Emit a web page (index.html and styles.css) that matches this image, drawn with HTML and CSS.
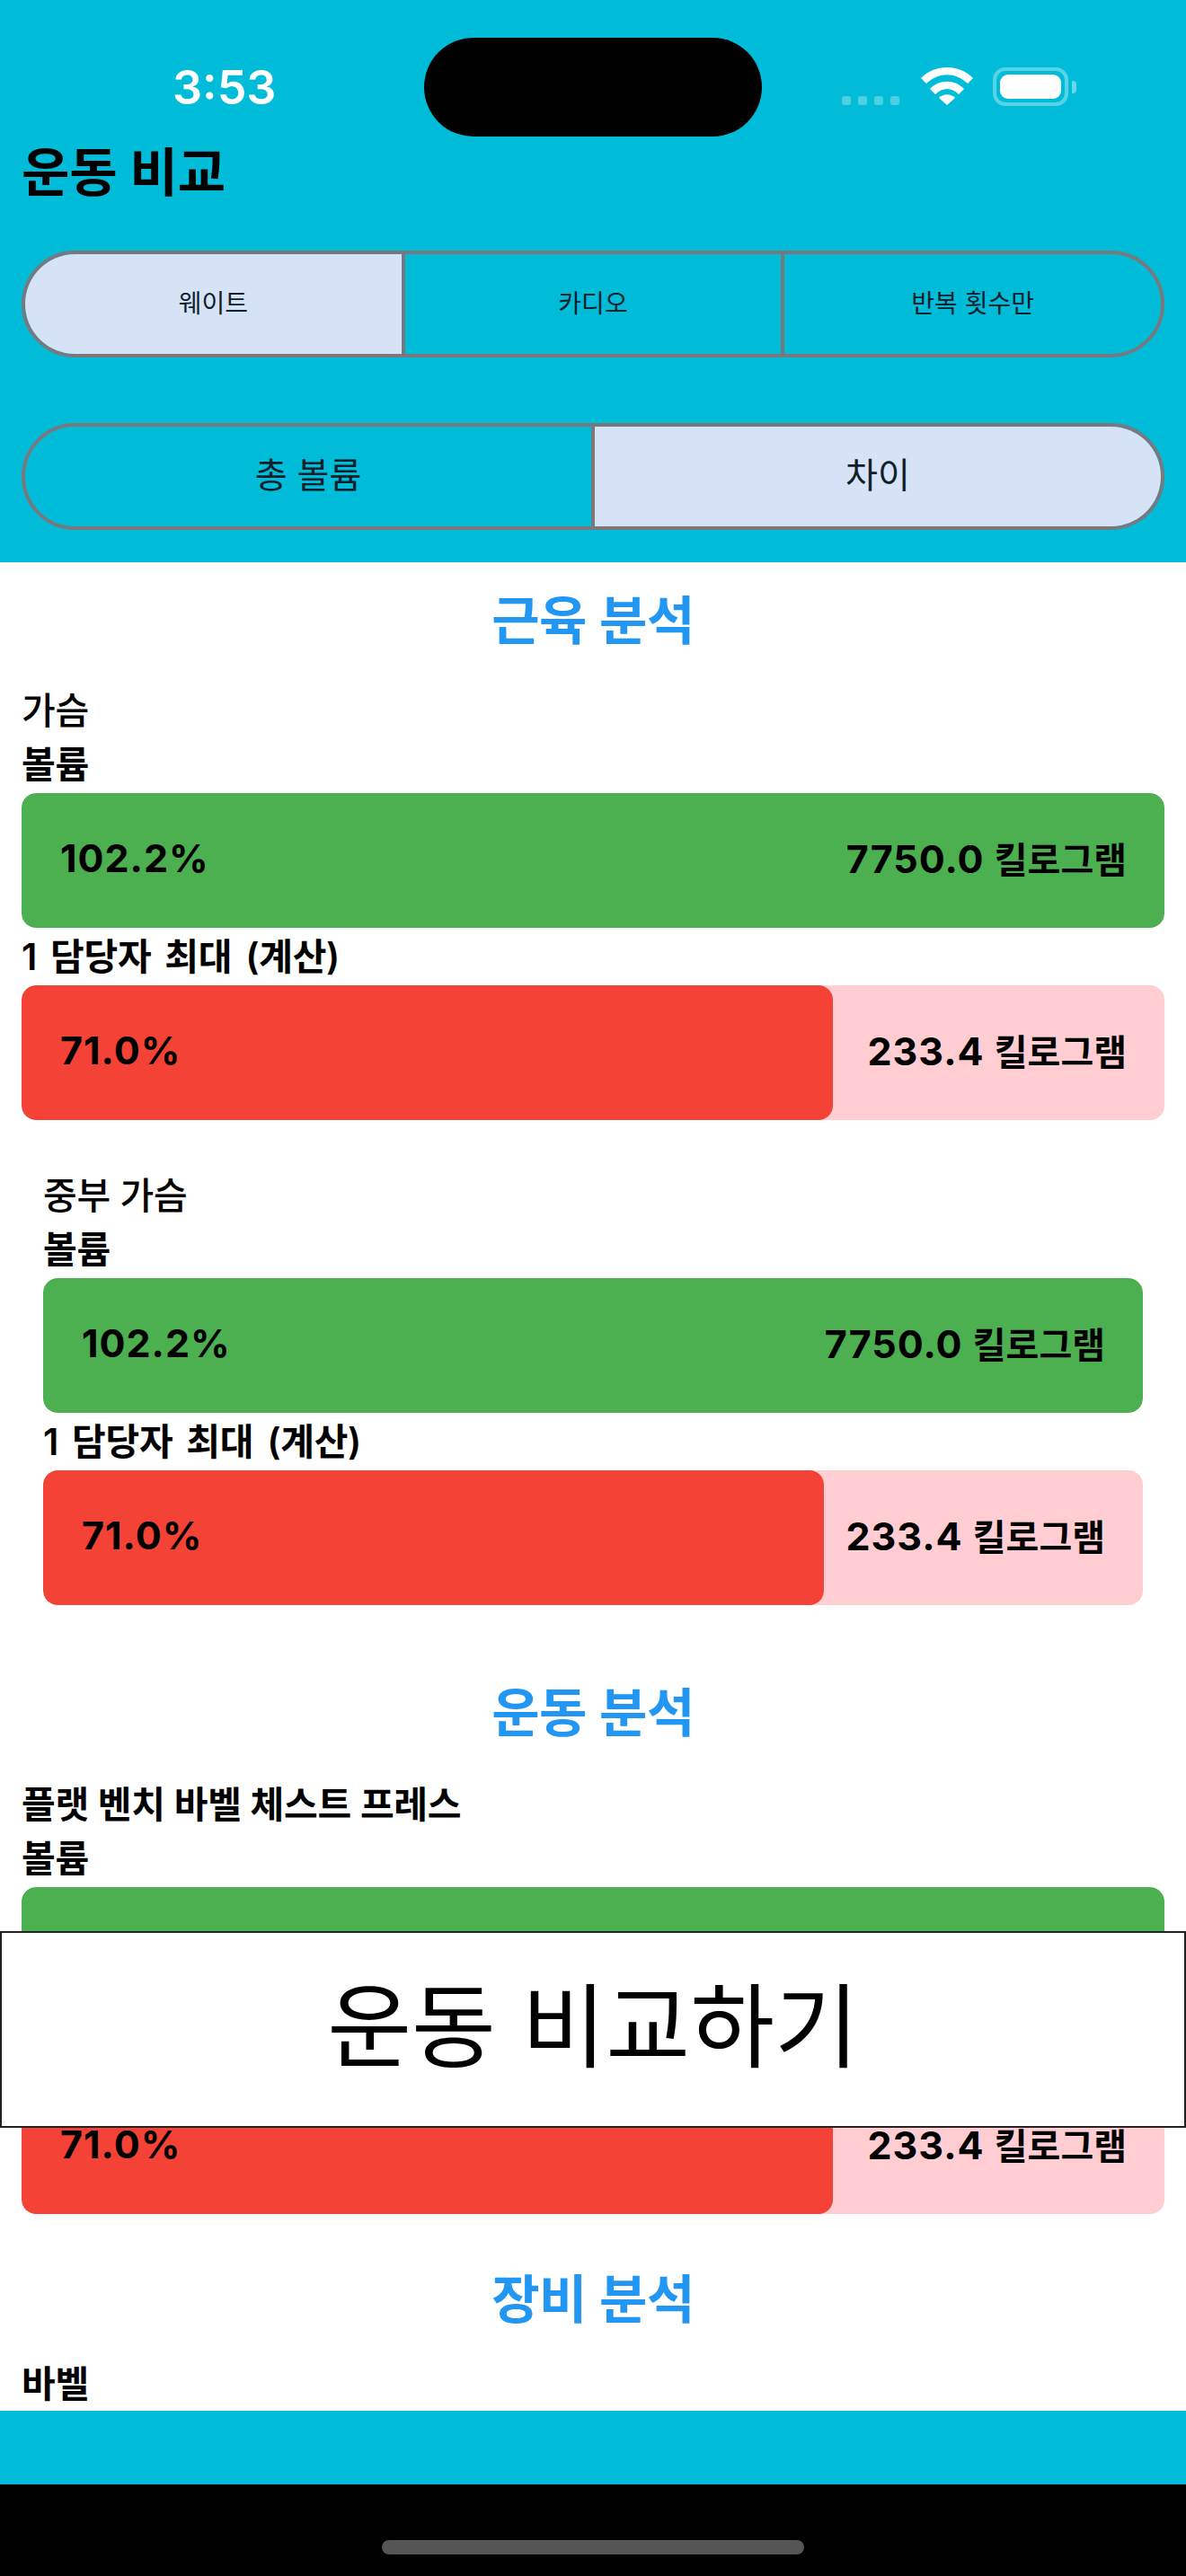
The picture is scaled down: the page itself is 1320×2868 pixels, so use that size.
FILE: index.html
```html
<!DOCTYPE html>
<html lang="ko">

<head>
    <meta charset="UTF-8">
    <title>운동 비교</title>
    <link rel="stylesheet" href="styles.css">
</head>

<body>

    <div class="app">
        <header class="top">
            <div class="status-bar">
                <div class="time">3:53</div>
                <div class="island"></div>
                <div class="status-icons">
                    <div class="signal"><span></span><span></span><span></span><span></span></div>
                    <svg class="wifi" width="58" height="42" viewBox="0 0 58 42">
                        <path d="M0 12C15-4 43-4 58 12L52 18C38 5 20 5 6 18Z" />
                        <path d="M10 24C20 13 38 13 48 24L42 30C34 22 24 22 16 30Z" />
                        <path d="M20 34C25 29 33 29 38 34L29 42Z" />
                    </svg>
                    <div class="battery"><div class="battery-level"></div></div>
                    <div class="battery-tip"></div>
                </div>
            </div>

            <h1>운동 비교</h1>

            <div class="segments small">
                <button class="selected">웨이트</button>
                <button>카디오</button>
                <button>반복 횟수만</button>
            </div>

            <div class="segments large">
                <button>총 볼륨</button>
                <button class="selected">차이</button>
            </div>
        </header>

        <main class="content">
            <h2>근육 분석</h2>

            <section class="group">
                <div class="name">가슴</div>
                <div class="name metric">볼륨</div>
                <div class="bar good">
                    <div class="fill" style="width: 100%"></div>
                    <div class="values"><span>102.2%</span><span>7750.0 <span class="unit">킬로그램</span></span></div>
                </div>
                <div class="name metric after-bar">1 담당자 최대 (계산)</div>
                <div class="bar bad">
                    <div class="fill" style="width: 71%"></div>
                    <div class="values"><span>71.0%</span><span>233.4 <span class="unit">킬로그램</span></span></div>
                </div>
            </section>

            <section class="group nested">
                <div class="name">중부 가슴</div>
                <div class="name metric">볼륨</div>
                <div class="bar good">
                    <div class="fill" style="width: 100%"></div>
                    <div class="values"><span>102.2%</span><span>7750.0 <span class="unit">킬로그램</span></span></div>
                </div>
                <div class="name metric after-bar">1 담당자 최대 (계산)</div>
                <div class="bar bad">
                    <div class="fill" style="width: 71%"></div>
                    <div class="values"><span>71.0%</span><span>233.4 <span class="unit">킬로그램</span></span></div>
                </div>
            </section>

            <h2 class="next">운동 분석</h2>

            <section class="group">
                <div class="name metric">플랫 벤치 바벨 체스트 프레스</div>
                <div class="name metric">볼륨</div>
                <div class="bar good">
                    <div class="fill" style="width: 100%"></div>
                    <div class="values"><span>102.2%</span><span>7750.0 <span class="unit">킬로그램</span></span></div>
                </div>
                <div class="name metric after-bar">1 담당자 최대 (계산)</div>
                <div class="bar bad">
                    <div class="fill" style="width: 71%"></div>
                    <div class="values"><span>71.0%</span><span>233.4 <span class="unit">킬로그램</span></span></div>
                </div>
            </section>

            <h2 class="next">장비 분석</h2>

            <section class="group">
                <div class="name metric last">바벨</div>
            </section>
        </main>

        <div class="bottom-band"></div>

        <div class="home-area">
            <div class="home-bar"></div>
        </div>

        <button class="compare-btn">운동 비교하기</button>
    </div>

</body>

</html>
```

FILE: styles.css
```css
* {
    box-sizing: border-box;
}

body {
    margin: 0;
    font-family: Inter, "Noto Sans CJK KR", sans-serif;
    color: #000;
    background: #000;
}

.app {
    position: relative;
    width: 1320px;
    height: 2868px;
    display: flex;
    flex-direction: column;
    overflow: hidden;
}

.top {
    height: 626px;
    background: #00bcd9;
    flex-shrink: 0;
}

.status-bar {
    height: 152px;
    padding-top: 42px;
    display: flex;
    align-items: flex-start;
}

.time {
    width: 472px;
    padding: 26px 0 0 192px;
    font-size: 52px;
    line-height: 60px;
    font-weight: 600;
    color: #fff;
}

.island {
    width: 376px;
    height: 110px;
    background: #000;
    border-radius: 55px;
}

.status-icons {
    flex: 1;
    height: 76px;
    padding: 33px 0 0 89px;
    display: flex;
    align-items: flex-start;
}

.signal {
    display: flex;
    gap: 8px;
    margin: 32px 24px 0 0;
}

.signal span {
    width: 10px;
    height: 10px;
    border-radius: 3px;
    background: rgba(255, 255, 255, 0.3);
}

.wifi {
    fill: #fff;
    margin-right: 22px;
}

.battery {
    width: 84px;
    height: 43px;
    padding: 4px;
    border: 4px solid rgba(255, 255, 255, 0.35);
    border-radius: 14px;
}

.battery-level {
    height: 100%;
    background: #fff;
    border-radius: 9px;
}

.battery-tip {
    width: 5px;
    height: 14px;
    margin: 15px 0 0 4px;
    background: rgba(255, 255, 255, 0.4);
    border-radius: 0 4px 4px 0;
}

h1 {
    margin: 0 24px;
    font-size: 58px;
    line-height: 80px;
    font-weight: 700;
}

.segments {
    display: flex;
    margin: 47px 24px 0;
    height: 119px;
    border: 4px solid #78797f;
    border-radius: 60px;
    overflow: hidden;
}

.segments.large {
    margin-top: 73px;
}

.segments button {
    flex: 1;
    padding: 0 0 6px;
    border: none;
    border-left: 4px solid #78797f;
    background: transparent;
    color: #10202a;
    font-family: inherit;
    font-size: 28px;
}

.segments button:first-child {
    border-left: none;
}

.segments.large button {
    padding-bottom: 10px;
    font-size: 39px;
}

.segments button.selected {
    background: #d6e3f7;
}

.content {
    flex: 1;
    min-height: 0;
    overflow: hidden;
    background: #fff;
    padding: 25px 24px 0;
}

h2 {
    margin: 0 0 30px;
    text-align: center;
    color: #2196f3;
    font-size: 58px;
    line-height: 80px;
    font-weight: 600;
    letter-spacing: -0.5px;
}

h2.next {
    margin: 55px 0 32px;
}

.name {
    font-size: 41px;
    line-height: 60px;
    font-weight: 500;
    letter-spacing: -0.3px;
}

.name.metric {
    font-weight: 600;
}

.name.after-bar {
    margin-top: 2px;
    word-spacing: 5px;
}

.name.last {
    margin-top: 8px;
    line-height: 44px;
}

.nested {
    margin-top: 54px;
    padding: 0 24px 25px;
}

.bar {
    position: relative;
    height: 150px;
    margin-top: 2px;
    border-radius: 16px;
    overflow: hidden;
}

.bar.good {
    background: #c8e6c9;
}

.bar.bad {
    background: #ffcdd2;
}

.fill {
    position: absolute;
    top: 0;
    bottom: 0;
    left: 0;
    border-radius: 16px;
}

.good .fill {
    background: #4caf50;
}

.bad .fill {
    background: #f44336;
}

.values {
    position: relative;
    height: 100%;
    padding: 0 42px 6px 43px;
    display: flex;
    align-items: center;
    justify-content: space-between;
    font-size: 43px;
    font-weight: 700;
    letter-spacing: 1px;
}

.unit {
    font-size: 40px;
    letter-spacing: 0;
}

.bottom-band {
    height: 82px;
    background: #00bcd9;
    flex-shrink: 0;
}

.home-area {
    height: 102px;
    padding-top: 62px;
    background: #000;
    flex-shrink: 0;
}

.home-bar {
    width: 470px;
    height: 16px;
    margin: 0 auto;
    background: #555;
    border-radius: 8px;
}

.compare-btn {
    position: absolute;
    left: 0;
    top: 2150px;
    width: 1320px;
    height: 219px;
    padding: 0 0 20px;
    background: #fff;
    border: 2px solid #222;
    color: #000;
    font-family: inherit;
    font-size: 102px;
    font-weight: 400;
}
```
